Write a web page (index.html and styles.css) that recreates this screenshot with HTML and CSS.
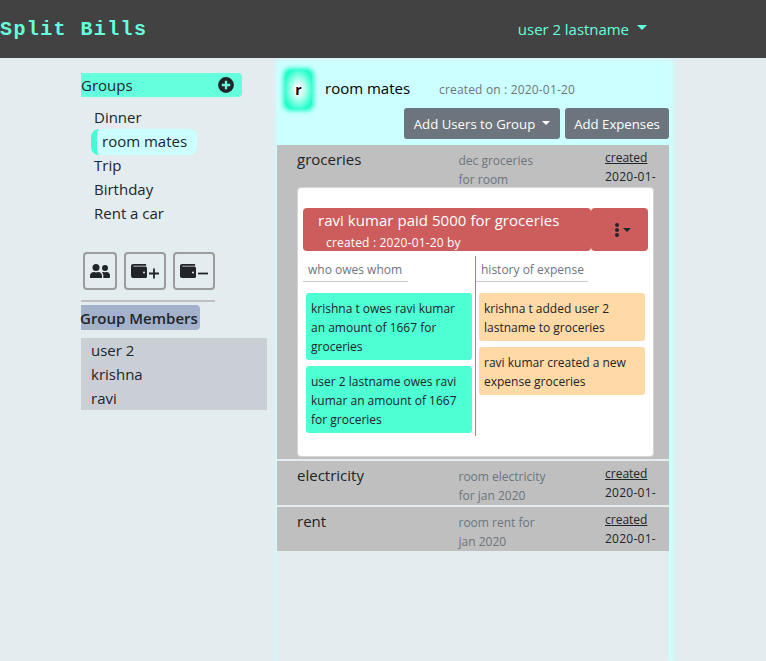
FILE: index.html
```html
<!DOCTYPE html>
<html lang="en">
<head>
<meta charset="utf-8">
<title>Split Bills</title>
<link rel="stylesheet" href="styles.css">
</head>
<body>
<header class="navbar">
  <div class="brand">Split Bills</div>
  <div class="user"><span class="user-name">user 2 lastname</span><i class="caret"></i></div>
</header>
<div class="page">
  <aside class="sidebar">
    <div class="groups-head"><span>Groups</span>
      <svg class="plus" viewBox="0 0 16 16"><circle cx="8" cy="8" r="7.9" fill="#212529"/><path d="M8 3.8v8.4M3.8 8h8.4" stroke="#6fd" stroke-width="2.3"/></svg>
    </div>
    <ul class="groups">
      <li>Dinner</li>
      <li class="active">room mates</li>
      <li>Trip</li>
      <li>Birthday</li>
      <li>Rent a car</li>
    </ul>
    <div class="tools">
      <button class="tool tool-users"><svg width="20" height="14" viewBox="0 0 20 14" fill="#212529"><circle cx="6" cy="3.5" r="3.5"/><circle cx="15" cy="4" r="3"/><path d="M0 14v-2.200C0 9.300 1.800 8 4 8c1.400.6 2.700.6 4 0 2.200 0 4 1.300 4 3.800V14zM13.300 14v-2.400c0-1.400-.5-2.500-1.300-3.300 1-.6 1.700-.4 2-.3.700.3 1.500.3 2.200 0C18.500 7.900 20 9.200 20 11.200V13l-.5 1z"/></svg></button>
      <button class="tool"><svg width="28" height="15" viewBox="0 0 28 15"><path fill="#212529" d="M2 0h12.500q.7 0 .7 1v.7H2.300v.8H14.500q1.500 0 1.500 1.500v8.500q0 1.500-1.500 1.500H2q-2 0-2-2V2q0-2 2-2z"/><circle cx="13" cy="8.500" r="1" fill="#e3ecef"/><path stroke="#212529" stroke-width="1.800" d="M18 9.500h10M23 4.500v10"/></svg></button>
      <button class="tool"><svg width="28" height="15" viewBox="0 0 28 15"><path fill="#212529" d="M2 0h12.500q.7 0 .7 1v.7H2.300v.8H14.500q1.500 0 1.500 1.500v8.500q0 1.500-1.500 1.500H2q-2 0-2-2V2q0-2 2-2z"/><circle cx="13" cy="8.500" r="1" fill="#e3ecef"/><path stroke="#212529" stroke-width="1.800" d="M18 9.500h10"/></svg></button>
    </div>
    <div class="rule"></div>
    <div class="members-head"><span>Group Members</span></div>
    <ul class="members">
      <li>user 2</li>
      <li>krishna</li>
      <li>ravi</li>
    </ul>
  </aside>
  <main class="panel">
    <div class="panel-head">
      <div class="title-row">
        <div class="avatar">r</div>
        <div class="group-name">room mates</div>
        <div class="created-on">created on : 2020-01-20</div>
      </div>
      <div class="buttons">
        <button class="btn btn-users"><span>Add Users to Group</span><i class="caret"></i></button>
        <button class="btn btn-exp"><span>Add Expenses</span></button>
      </div>
    </div>
    <section class="expense open">
      <div class="summary">
        <div class="name">groceries</div>
        <div class="desc">dec groceries<br>for room</div>
        <div class="date"><u>created</u><br>2020-01-</div>
      </div>
      <div class="card">
        <div class="card-head">
          <div class="paid">
            <div class="paid-title">ravi kumar paid 5000 for groceries</div>
            <div class="paid-sub">created : 2020-01-20 by</div>
          </div>
          <div class="menu"><svg width="4" height="14" viewBox="0 0 4 14" fill="#212529"><circle cx="2" cy="2" r="2"/><circle cx="2" cy="7" r="2"/><circle cx="2" cy="12" r="2"/></svg><i class="caret"></i></div>
        </div>
        <div class="columns">
          <div class="col">
            <div class="col-title">who owes whom</div>
            <div class="note owes">krishna t owes ravi kumar<br>an amount of 1667 for<br>groceries</div>
            <div class="note owes">user 2 lastname owes ravi<br>kumar an amount of 1667<br>for groceries</div>
          </div>
          <div class="col history">
            <div class="col-title">history of expense</div>
            <div class="note log">krishna t added user 2<br>lastname to groceries</div>
            <div class="note log">ravi kumar created a new<br>expense groceries</div>
          </div>
        </div>
      </div>
    </section>
    <section class="expense">
      <div class="summary">
        <div class="name">electricity</div>
        <div class="desc">room electricity<br>for jan 2020</div>
        <div class="date"><u>created</u><br>2020-01-</div>
      </div>
    </section>
    <section class="expense">
      <div class="summary">
        <div class="name">rent</div>
        <div class="desc">room rent for<br>jan 2020</div>
        <div class="date"><u>created</u><br>2020-01-</div>
      </div>
    </section>
  </main>
</div>
</body>
</html>
```
FILE: styles.css
```css
* { box-sizing: border-box; }
body {
  margin: 0;
  height: 661px;
  overflow: hidden;
  background: #e3ecef;
  color: #212529;
  font: 15px/24px "Open Sans", "Noto Sans", sans-serif;
}
ul { list-style: none; margin: 0; padding: 0; }
button { font: inherit; margin: 0; padding: 0; }
.caret {
  display: inline-block;
  border-top: 5px solid currentColor;
  border-left: 5px solid transparent;
  border-right: 5px solid transparent;
}
.navbar {
  position: relative;
  z-index: 1;
  display: flex;
  align-items: center;
  justify-content: space-between;
  height: 58px;
  padding-right: 119px;
  background: #424242;
  color: #6fd;
}
.brand {
  padding-top: 2px;
  font: bold 20px/24px "Courier New", "Liberation Mono", monospace;
  letter-spacing: 1.4px;
}
.user { display: flex; align-items: center; gap: 8px; white-space: nowrap; }
.user-name { letter-spacing: -.04px; }
.user .caret { margin-top: -3px; }
.page { display: flex; height: 603px; }
.sidebar { width: 277px; padding: 15px 0 0 81px; }
.groups-head {
  display: flex;
  align-items: center;
  justify-content: space-between;
  width: 161px;
  height: 24px;
  padding-right: 8px;
  border-radius: 0 4px 4px 0;
  background: #6fd;
}
.plus { width: 16px; height: 16px; }
.groups { padding: 9px 0 0 10px; }
.groups li { height: 24px; padding-left: 3px; line-height: 22px; }
.groups .active {
  width: 106px;
  height: 26px;
  margin: -1px 0;
  padding-left: 5px;
  border-left: 6px solid #48fad3;
  border-radius: 8px;
  background: #cff;
  line-height: 24px;
}
.tools { display: flex; gap: 7px; padding: 26px 0 0 2px; }
.tool {
  display: flex;
  align-items: center;
  justify-content: center;
  width: 42px;
  height: 38px;
  border: 2px solid #9c9c9c;
  border-radius: 4px;
  background: none;
}
.tool-users { width: 34px; }
.rule { width: 134px; height: 2px; margin: 10px 0 3px; background: #bfbfbf; }
.members-head {
  width: 119px;
  height: 25px;
  border-radius: 0 4px 4px 0;
  background: #a3b1cb;
  font-weight: 600;
  line-height: 26px;
  white-space: nowrap;
}
.members-head span { margin-left: -1px; }
.members { width: 186px; height: 72px; margin-top: 8px; padding-left: 10px; background: #cacfd6; }
.panel {
  width: 392px;
  margin-top: 4px;
  box-shadow: 2px 0 5px 3px #cff;
  background: #e3ecef;
}
.panel-head { height: 83px; background: #cff; color: #000; }
.title-row { display: flex; align-items: center; padding: 8px 0 0 8px; height: 46px; white-space: nowrap; }
.avatar {
  width: 27px;
  height: 39px;
  border-radius: 5px;
  background: radial-gradient(ellipse at center, #fff 12%, #2fc 78%);
  box-shadow: 0 0 4px 2px #2fc;
  font-weight: 700;
  font-size: 14px;
  line-height: 39px;
  text-align: center;
}
.group-name { width: 114px; margin-left: 13px; line-height: 22px; padding-bottom: 2px; }
.created-on { padding-top: 1px; font-size: 12px; letter-spacing: .17px; color: #6c757d; }
.buttons { display: flex; justify-content: flex-end; gap: 5px; }
.btn {
  display: flex;
  align-items: center;
  justify-content: center;
  gap: 7px;
  height: 31px;
  border: 0;
  border-radius: 3px;
  background: #6c757d;
  color: #fff;
  font-size: 13.2px;
  white-space: nowrap;
}
.btn-users { width: 156px; }
.btn-exp { width: 104px; }
.btn .caret { border-width: 4px 4px 0; margin-top: -2px; }
.expense { height: 44px; margin-bottom: 2px; background: #bfbfbf; }
.expense.open { height: 314px; }
.summary { display: flex; height: 42px; padding-left: 20px; white-space: nowrap; }
.name { width: 161.500px; line-height: 29px; }
.desc { width: 146.500px; padding-top: 6px; color: #6c757d; font-size: 12px; line-height: 19px; }
.date { padding-top: 3px; font-size: 12px; line-height: 19px; letter-spacing: .25px; }
.date u { letter-spacing: 0; }
.card {
  width: 357px;
  height: 270px;
  margin-left: 20px;
  padding: 20px 5px 0;
  border: 1px solid #d5d5d5;
  border-radius: 4px;
  background: #fff;
}
.card-head { display: flex; width: 345px; height: 43px; color: #fff; white-space: nowrap; }
.paid { width: 288px; border-radius: 4px; background: #cd5c5c; padding-left: 15px; }
.paid-title { font-size: 15px; letter-spacing: .04px; line-height: 25px; }
.paid-sub { padding-left: 8px; font-size: 12px; letter-spacing: .17px; line-height: 19px; }
.menu {
  display: flex;
  align-items: center;
  justify-content: center;
  gap: 4px;
  width: 57px;
  padding-left: 6px;
  border-radius: 4px;
  background: #cd5c5c;
  color: #212529;
}
.menu .caret { border-width: 4px 4px 0; }
.columns { display: flex; padding-top: 5px; font-size: 12px; line-height: 19px; white-space: nowrap; }
.col { width: 172px; height: 180px; }
.history { width: 173px; border-left: 1px solid #ff5c5c; }
.col-title {
  width: 105px;
  height: 26px;
  margin-bottom: 11px;
  padding: 4px 0 0 5px;
  border-bottom: 1px solid #c8c8c8;
  color: #6c757d;
}
.history .col-title { width: 112px; }
.note { width: 166px; margin: 0 0 6px 3px; padding: 6px 5px 4px; border-radius: 3px; }
.owes { background: #4dffd2; }
.log { background: #ffd9a6; }
```
